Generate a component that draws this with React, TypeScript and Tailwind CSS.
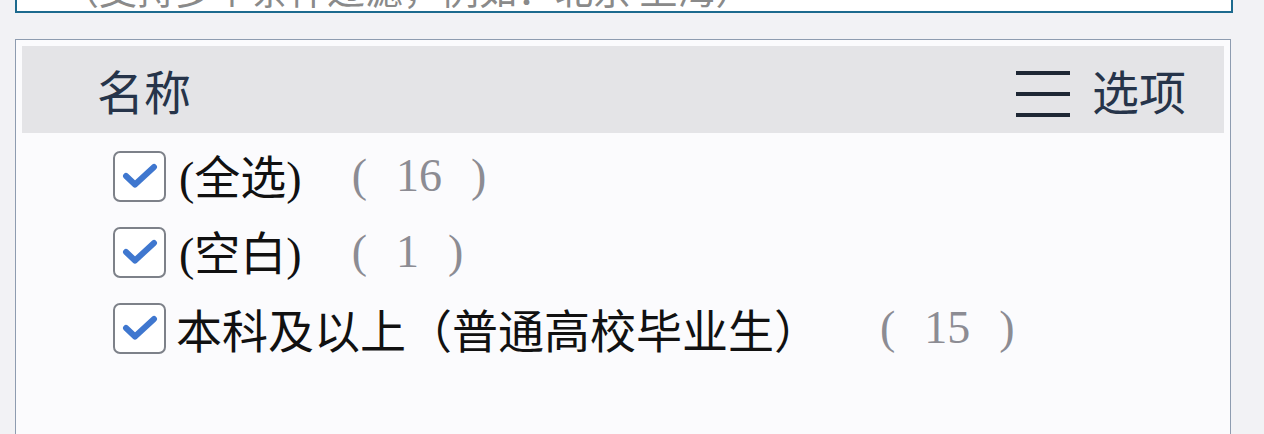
const cjk = '"Noto Sans CJK SC", "Noto Sans", sans-serif';
const serif = '"Liberation Serif", "Noto Sans CJK SC", serif';

type Item = { label: string; count: string };

const items: Item[] = [
  { label: '(全选)', count: '16' },
  { label: '(空白)', count: '1' },
  { label: '本科及以上（普通高校毕业生）', count: '15' },
];

function CheckBox() {
  return (
    <div className="flex h-[51px] w-[53px] shrink-0 items-center justify-center rounded-[7px] border-2 border-[#7d8189] bg-white">
      <svg width="36" height="28" viewBox="0 0 36 28" fill="none">
        <path d="M4 14 L13 22.5 L32 5" stroke="#3f77cf" strokeWidth="6" strokeLinecap="round" strokeLinejoin="round" />
      </svg>
    </div>
  );
}

function Label({ text }: { text: string }) {
  // ascii parens come from the serif face, CJK from Noto
  const parts = text.split(/([()])/).filter(Boolean);
  return (
    <span className="whitespace-nowrap text-[46px] leading-none text-[#111]" style={{ fontFamily: cjk }}>
      {parts.map((p, i) =>
        p === '(' || p === ')' ? (
          <span key={i} style={{ fontFamily: serif }}>
            {p}
          </span>
        ) : (
          <span key={i}>{p}</span>
        ),
      )}
    </span>
  );
}

function Row({ item, countGap, labelGap }: { item: Item; countGap: string; labelGap: string }) {
  return (
    <div className="flex h-[76px] items-center">
      <CheckBox />
      <div className={`flex items-center ${labelGap}`}>
        <Label text={item.label} />
        <div
          className={`flex items-center gap-[29px] text-[46px] font-light leading-none text-[#8c8c93] ${countGap}`}
          style={{ fontFamily: serif }}
        >
          <span>(</span>
          <span>{item.count}</span>
          <span>)</span>
        </div>
      </div>
    </div>
  );
}

export default function App() {
  return (
    <div className="h-[434px] w-[1264px] overflow-hidden bg-[#f2f2f5]">
      <div className="ml-[15px] -mt-[46px] flex h-[59px] w-[1218px] items-end border-2 border-[#1d6a8e] bg-white pb-[4px] pl-[44px]">
        <span className="whitespace-nowrap text-[38px] leading-none text-[#8a8a8a]" style={{ fontFamily: cjk }}>
          （支持多个条件过滤，例如：北京 上海）
        </span>
      </div>

      <div className="ml-[15px] mt-[26px] h-[420px] w-[1216px] border border-[#8e9cb0] bg-[#fbfbfd] p-[6px]">
        <div
          className="flex h-[87px] items-center justify-between bg-[#e4e4e7] pl-[75px] pr-[38px] text-[47px] leading-none text-[#26344a]"
          style={{ fontFamily: cjk }}
        >
          <span>名称</span>
          <div className="flex items-center gap-[22px]">
            <div className="mt-[8px] flex w-[54px] flex-col gap-[17px]">
              <div className="h-[4px] bg-[#1e2735]" />
              <div className="h-[4px] bg-[#1e2735]" />
              <div className="h-[4px] bg-[#1e2735]" />
            </div>
            <span>选项</span>
          </div>
        </div>

        <div className="pl-[91px] pt-[5px]">
          <Row item={items[0]} labelGap="ml-[13px]" countGap="ml-[50px]" />
          <Row item={items[1]} labelGap="ml-[13px]" countGap="ml-[50px]" />
          <Row item={items[2]} labelGap="ml-[10px]" countGap="ml-[60px]" />
        </div>
      </div>
    </div>
  );
}
